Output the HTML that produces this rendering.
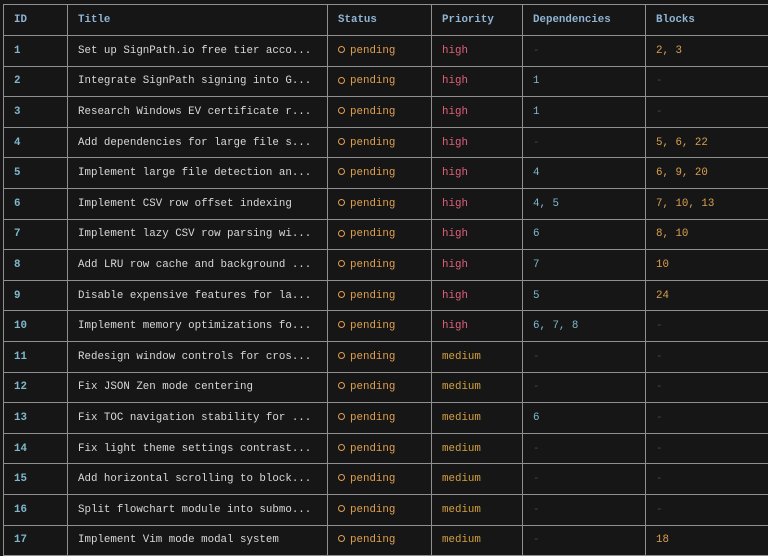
<!DOCTYPE html>
<html><head><meta charset="utf-8"><style>
html,body{margin:0;padding:0;background:#161616;width:768px;height:547px;overflow:hidden}
table{position:absolute;left:3px;top:4px;border-collapse:collapse;table-layout:fixed;width:800px;font-family:"Liberation Mono",monospace;font-size:10.8px;color:#d8d8d8}
td,th{border:1px solid #8f8f8f;height:30.6px;padding:0 0 0 10px;text-align:left;white-space:nowrap;overflow:hidden;font-weight:normal;box-sizing:border-box}
th{height:31px;color:#8fb4d4;font-weight:bold}
tr td:last-child,tr th:last-child{border-right:none}
.id{color:#7fb8cc;font-weight:bold}
.p{color:#e0a050}
.p i{display:inline-block;width:5px;height:5px;border:1.3px solid #e0a050;border-radius:50%;margin:0 5px 1px 0;vertical-align:middle}
.h{color:#e0607a}
.m{color:#d4a040}
.d{color:#7fb8cc}
.b{color:#d9a050}
.n{color:#4a4a4a}
</style></head><body>
<table>
<colgroup><col style="width:64px"><col style="width:260px"><col style="width:104px"><col style="width:91px"><col style="width:123px"><col style="width:158px"></colgroup>
<tr><th>ID</th><th>Title</th><th>Status</th><th>Priority</th><th>Dependencies</th><th>Blocks</th></tr>
<tr><td class="id">1</td><td>Set up SignPath.io free tier acco...</td><td class="p"><i></i>pending</td><td class="h">high</td><td class="n">-</td><td class="b">2, 3</td></tr>
<tr><td class="id">2</td><td>Integrate SignPath signing into G...</td><td class="p"><i></i>pending</td><td class="h">high</td><td class="d">1</td><td class="n">-</td></tr>
<tr><td class="id">3</td><td>Research Windows EV certificate r...</td><td class="p"><i></i>pending</td><td class="h">high</td><td class="d">1</td><td class="n">-</td></tr>
<tr><td class="id">4</td><td>Add dependencies for large file s...</td><td class="p"><i></i>pending</td><td class="h">high</td><td class="n">-</td><td class="b">5, 6, 22</td></tr>
<tr><td class="id">5</td><td>Implement large file detection an...</td><td class="p"><i></i>pending</td><td class="h">high</td><td class="d">4</td><td class="b">6, 9, 20</td></tr>
<tr><td class="id">6</td><td>Implement CSV row offset indexing</td><td class="p"><i></i>pending</td><td class="h">high</td><td class="d">4, 5</td><td class="b">7, 10, 13</td></tr>
<tr><td class="id">7</td><td>Implement lazy CSV row parsing wi...</td><td class="p"><i></i>pending</td><td class="h">high</td><td class="d">6</td><td class="b">8, 10</td></tr>
<tr><td class="id">8</td><td>Add LRU row cache and background ...</td><td class="p"><i></i>pending</td><td class="h">high</td><td class="d">7</td><td class="b">10</td></tr>
<tr><td class="id">9</td><td>Disable expensive features for la...</td><td class="p"><i></i>pending</td><td class="h">high</td><td class="d">5</td><td class="b">24</td></tr>
<tr><td class="id">10</td><td>Implement memory optimizations fo...</td><td class="p"><i></i>pending</td><td class="h">high</td><td class="d">6, 7, 8</td><td class="n">-</td></tr>
<tr><td class="id">11</td><td>Redesign window controls for cros...</td><td class="p"><i></i>pending</td><td class="m">medium</td><td class="n">-</td><td class="n">-</td></tr>
<tr><td class="id">12</td><td>Fix JSON Zen mode centering</td><td class="p"><i></i>pending</td><td class="m">medium</td><td class="n">-</td><td class="n">-</td></tr>
<tr><td class="id">13</td><td>Fix TOC navigation stability for ...</td><td class="p"><i></i>pending</td><td class="m">medium</td><td class="d">6</td><td class="n">-</td></tr>
<tr><td class="id">14</td><td>Fix light theme settings contrast...</td><td class="p"><i></i>pending</td><td class="m">medium</td><td class="n">-</td><td class="n">-</td></tr>
<tr><td class="id">15</td><td>Add horizontal scrolling to block...</td><td class="p"><i></i>pending</td><td class="m">medium</td><td class="n">-</td><td class="n">-</td></tr>
<tr><td class="id">16</td><td>Split flowchart module into submo...</td><td class="p"><i></i>pending</td><td class="m">medium</td><td class="n">-</td><td class="n">-</td></tr>
<tr><td class="id">17</td><td>Implement Vim mode modal system</td><td class="p"><i></i>pending</td><td class="m">medium</td><td class="n">-</td><td class="b">18</td></tr>
</table>
</body></html>
